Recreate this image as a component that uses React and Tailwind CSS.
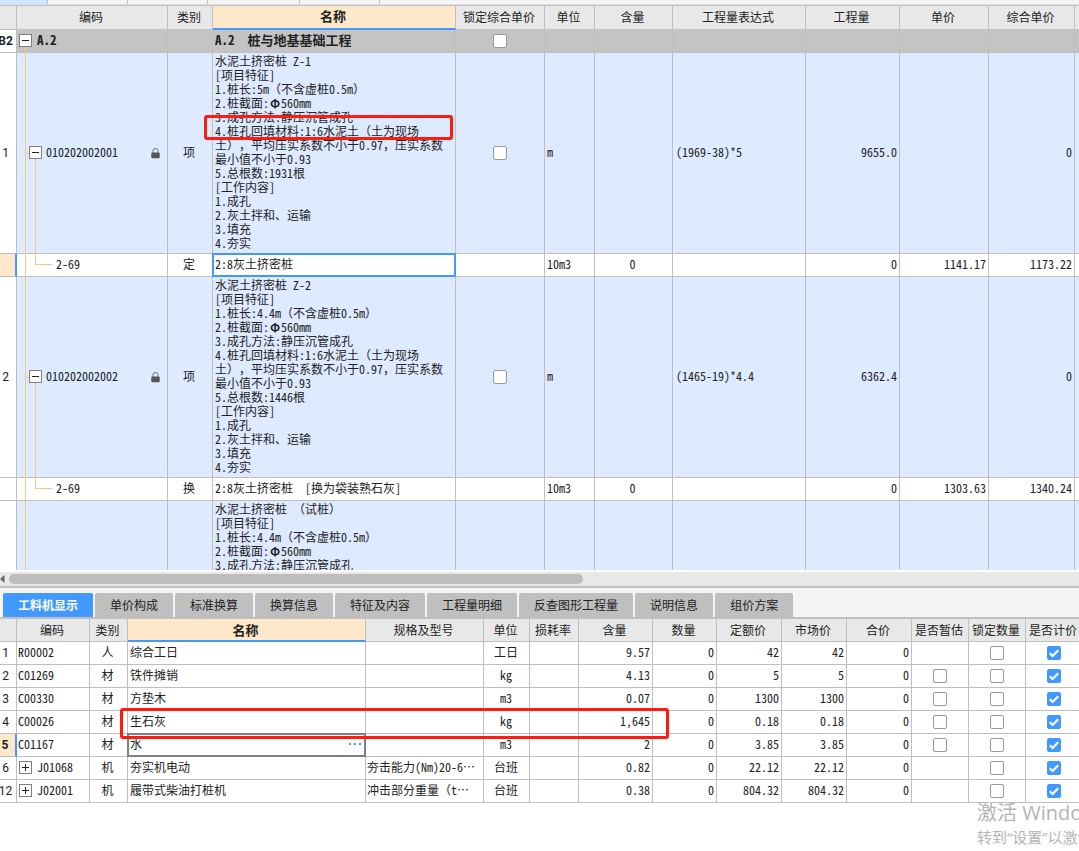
import React from "react";

const LINE = "border-r border-b border-[#bfbfbf]";

function Check({ label, checked }) {
  return (
    <span className="relative mx-auto block size-3.5">
      <input
        type="checkbox"
        aria-label={label}
        defaultChecked={checked}
        className="peer block size-3.5 appearance-none rounded-[2px] border border-[#999999] bg-white checked:border-[#4198ff] checked:bg-[#4198ff]"
      />
      <svg
        viewBox="0 0 14 14"
        className="pointer-events-none absolute inset-0 hidden size-3.5 peer-checked:block"
        fill="none"
        stroke="#fff"
        strokeWidth="2.2"
      >
        <path d="M2.8 7.3 L5.6 10 L11.2 4.2" />
      </svg>
    </span>
  );
}

function Toggle({ open, label }) {
  return (
    <button
      type="button"
      aria-label={label}
      aria-expanded={open}
      className="relative z-10 mt-px block size-[13px] shrink-0 border border-[#7f7f7f] bg-white"
    >
      <svg viewBox="0 0 11 11" className="block size-[11px]" stroke="#222" strokeWidth="1">
        <path d={open ? "M2 5.5H9" : "M2 5.5H9M5.5 2V9"} />
      </svg>
    </button>
  );
}

function Lock() {
  return (
    <svg viewBox="0 0 9 11" className="mt-[3px] ml-auto h-[11px] w-[9px] shrink-0">
      <path d="M2 5V3a2.5 2.5 0 0 1 5 0V5" fill="none" stroke="#85898f" strokeWidth="1.1" />
      <rect x="0.3" y="4.6" width="8.4" height="5.6" rx="0.8" fill="#555" />
    </svg>
  );
}

/* Gives Φ and … a full em of their own, as the ideographs around them have. */
function Wide({ children }) {
  return children.split(/([Φ…])/).map((part, i) => {
    if (part === "Φ" || part === "…") {
      return (
        <span
          key={i}
          lang="zh-CN"
          className={`inline-block w-3 text-center font-['Noto_Sans_CJK_SC',sans-serif] ${part === "Φ" ? "font-bold" : ""}`}
        >
          {part}
        </span>
      );
    }
    return part;
  });
}

const VLINE = "absolute w-px bg-[#ffc676]";
const HLINE = "absolute h-px bg-[#ffc676]";

function CodeCell({ row }) {
  if (row.kind === "group") {
    return (
      <>
        <span className={`${VLINE} -bottom-px left-2 h-2`} />
        <div className="flex h-4 items-start gap-[5px] pl-0.5">
          <Toggle open label="A.2" />
          <span className="text-[13px]">{row.code}</span>
        </div>
      </>
    );
  }
  if (row.kind === "item") {
    return (
      <>
        <span className={`${VLINE} top-0 -bottom-px left-2`} />
        {row.code && (
          <>
            <span className={`${HLINE} top-1/2 left-2 w-1`} />
            <span className={`${VLINE} top-1/2 -bottom-px left-[18px]`} />
            <div className="flex h-4 items-start gap-1 pr-[7px] pl-3">
              <Toggle open label={row.code} />
              <span>{row.code}</span>
              <Lock />
            </div>
          </>
        )}
      </>
    );
  }
  return (
    <>
      <span className={`${VLINE} top-0 -bottom-px left-2`} />
      <span className={`${VLINE} top-0 left-[18px] h-2.5`} />
      <span className={`${HLINE} top-2.5 left-[18px] w-[17px]`} />
      <div className="pb-0.5 pl-[39px]">{row.code}</div>
    </>
  );
}

const features = (title, length, count) => [
  title,
  "[项目特征]",
  `1.桩长:${length}（不含虚桩0.5m）`,
  "2.桩截面:Φ560mm",
  "3.成孔方法:静压沉管成孔",
  "4.桩孔回填材料:1:6水泥土（土为现场",
  "土），平均压实系数不小于0.97，压实系数",
  "最小值不小于0.93",
  `5.总根数:${count}根`,
  "[工作内容]",
  "1.成孔",
  "2.灰土拌和、运输",
  "3.填充",
  "4.夯实",
];

const topRows = [
  { kind: "group", no: "B2", code: "A.2", name: ["A.2  桩与地基基础工程"], check: true },
  {
    kind: "item", no: "1", code: "010202002001", type: "项", name: features("水泥土挤密桩 Z-1", "5m", "1931"),
    check: true, unit: "m", expr: "(1969-38)*5", qty: "9655.0", total: "0", marked: true,
  },
  {
    kind: "quota", no: "", code: "2-69", type: "定", name: ["2:8灰土挤密桩"],
    unit: "10m3", content: "0", qty: "0", price: "1141.17", total: "1173.22", selected: true,
  },
  {
    kind: "item", no: "2", code: "010202002002", type: "项", name: features("水泥土挤密桩 Z-2", "4.4m", "1446"),
    check: true, unit: "m", expr: "(1465-19)*4.4", qty: "6362.4", total: "0",
  },
  {
    kind: "quota", no: "", code: "2-69", type: "换", name: ["2:8灰土挤密桩  [换为袋装熟石灰]"],
    unit: "10m3", content: "0", qty: "0", price: "1303.63", total: "1340.24",
  },
  { kind: "item", no: "", code: "", type: "", name: features("水泥土挤密桩 （试桩）", "4.4m", "").slice(0, 5) },
];

const topHeads = ["", "编码", "类别", "名称", "锁定综合单价", "单位", "含量", "工程量表达式", "工程量", "单价", "综合单价", ""];

const rowBg = { group: "bg-[#c4c4c4] font-bold", item: "bg-[#deeaff]", quota: "bg-white" };
const rowHeight = { group: "h-[23px]", item: "h-[201px]", quota: "h-[23px]" };

function RowHead({ children, active, bold }) {
  return (
    <th
      scope="row"
      className={`overflow-hidden border-b border-[#bfbfbf] p-0 font-[Roboto,sans-serif] ${
        active ? "border-r-2 border-r-[#4198ff] bg-[#ffe7c9]" : "border-r bg-white"
      } ${bold ? "font-bold" : "font-normal"}`}
    >
      <div className="-ml-1 flex justify-center pr-px">{children}</div>
    </th>
  );
}

function Head({ children, active }) {
  return (
    <th
      scope="col"
      className={
        active
          ? "border-r border-b-2 border-r-[#bfbfbf] border-b-[#4198ff] bg-[#ffe7c9] p-0 pr-0.5 text-[13px] font-bold"
          : `${LINE} bg-[#e8e8e8] p-0 pr-0.5 font-normal`
      }
    >
      {children}
    </th>
  );
}

function BillTable() {
  return (
    <table className="w-full min-w-[1090px] table-fixed border-separate border-spacing-0 border-t border-[#bfbfbf]">
      <colgroup>
        <col className="w-[17px]" />
        <col className="w-[151px]" />
        <col className="w-[45px]" />
        <col className="w-[243px]" />
        <col className="w-[89px]" />
        <col className="w-[50px]" />
        <col className="w-[78px]" />
        <col className="w-[133px]" />
        <col className="w-[94px]" />
        <col className="w-[89px]" />
        <col className="w-[86px]" />
        <col />
      </colgroup>
      <thead>
        <tr className="h-6 [&>th]:pb-0.5">
          {topHeads.map((h, i) => (
            <Head key={i} active={h === "名称"}>{h}</Head>
          ))}
        </tr>
      </thead>
      <tbody>
        {topRows.map((r, i) => {
          const cell = `${LINE} ${rowBg[r.kind]}`;
          return (
            <tr key={i} className={rowHeight[r.kind]}>
              <RowHead active={r.selected} bold={r.kind === "group"}>{r.no}</RowHead>
              <td className={`${cell} relative p-0`}><CodeCell row={r} /></td>
              <td className={`${cell} p-0 pr-0.5 pb-0.5 text-center`}>{r.type}</td>
              <td
                className={`${cell} relative p-0 pl-0.5 whitespace-pre ${r.kind === "group" ? "text-[13px]" : ""} ${
                  r.kind === "item" ? "pt-px align-top" : "pb-0.5"
                }`}
              >
                {r.name.map((l) => (
                  <div key={l} className="h-3.5"><Wide>{l}</Wide></div>
                ))}
                {r.selected && <span className="pointer-events-none absolute -inset-px border-2 border-[#4198ff]" />}
                {r.marked && (
                  <span className="pointer-events-none absolute top-[62px] right-0.5 -left-[9px] z-20 h-[25px] rounded-[3px] border-3 border-[#ff1c0f]" />
                )}
              </td>
              <td className={`${cell} p-0`}>{r.check && <Check label={`锁定综合单价 ${r.code}`} />}</td>
              <td className={`${cell} p-0 pb-0.5 pl-0.5`}>{r.unit}</td>
              <td className={`${cell} p-0 pr-0.5 pb-0.5 text-center`}>{r.content}</td>
              <td className={`${cell} p-0 pb-0.5 pl-[3px]`}>{r.expr}</td>
              <td className={`${cell} p-0 pr-0.5 pb-0.5 text-right`}>{r.qty}</td>
              <td className={`${cell} p-0 pr-0.5 pb-0.5 text-right`}>{r.price}</td>
              <td className={`${cell} p-0 pr-0.5 pb-0.5 text-right`}>{r.total}</td>
              <td className={`${cell} p-0`} />
            </tr>
          );
        })}
      </tbody>
    </table>
  );
}

const tabs = ["工料机显示", "单价构成", "标准换算", "换算信息", "特征及内容", "工程量明细", "反查图形工程量", "说明信息", "组价方案"];

const resHeads = ["", "编码", "类别", "名称", "规格及型号", "单位", "损耗率", "含量", "数量", "定额价", "市场价", "合价", "是否暂估", "锁定数量", "是否计价"];

const resources = [
  { no: "1", code: "R00002", type: "人", name: "综合工日", spec: "", unit: "工日", amount: "9.57", price: "42" },
  { no: "2", code: "C01269", type: "材", name: "铁件摊销", spec: "", unit: "kg", amount: "4.13", price: "5", est: true },
  { no: "3", code: "C00330", type: "材", name: "方垫木", spec: "", unit: "m3", amount: "0.07", price: "1300", est: true },
  { no: "4", code: "C00026", type: "材", name: "生石灰", spec: "", unit: "kg", amount: "1,645", price: "0.18", est: true, marked: true },
  { no: "5", code: "C01167", type: "材", name: "水", spec: "", unit: "m3", amount: "2", price: "3.85", est: true, active: true },
  { no: "6", code: "J01068", type: "机", name: "夯实机电动", spec: "夯击能力(Nm)20-6…", unit: "台班", amount: "0.82", price: "22.12", parent: true },
  { no: "12", code: "J02001", type: "机", name: "履带式柴油打桩机", spec: "冲击部分重量（t…", unit: "台班", amount: "0.38", price: "804.32", parent: true },
];

function ResourceTable() {
  const box = `${LINE} bg-white p-0`;
  const cell = `${box} pb-0.5`;
  const num = `${cell} pr-0.5 text-right`;
  return (
    <table className="w-full min-w-[1083px] table-fixed border-separate border-spacing-0">
      <colgroup>
        <col className="w-[17px]" />
        <col className="w-[73px]" />
        <col className="w-[38px]" />
        <col className="w-[238px]" />
        <col className="w-[118px]" />
        <col className="w-[46px]" />
        <col className="w-[49px]" />
        <col className="w-[74px]" />
        <col className="w-[64px]" />
        <col className="w-[65px]" />
        <col className="w-[65px]" />
        <col className="w-[65px]" />
        <col className="w-[57px]" />
        <col className="w-[57px]" />
        <col />
      </colgroup>
      <thead>
        <tr className="h-[23px]">
          {resHeads.map((h, i) => (
            <Head key={i} active={h === "名称"}>{h}</Head>
          ))}
        </tr>
      </thead>
      <tbody>
        {resources.map((r) => (
          <tr key={r.no} className="h-[23px]">
            <RowHead active={r.active} bold={r.active}>{r.no}</RowHead>
            <td className={box}>
              <div className={`flex h-4 items-start gap-[5px] ${r.parent ? "pl-0.5" : "pl-px"}`}>
                {r.parent && <Toggle label={r.code} />}
                <span>{r.code}</span>
              </div>
            </td>
            <td className={`${cell} pr-0.5 text-center`}>{r.type}</td>
            <td className={`${cell} relative pl-0.5`}>
              <div className="flex items-center justify-between pr-1">
                {r.name}
                {r.active && (
                  <button type="button" aria-label="选择" className="flex h-3.5 items-center gap-[3px]">
                    <span className="size-0.5 bg-[#4a9be0]" />
                    <span className="size-0.5 bg-[#4a9be0]" />
                    <span className="size-0.5 bg-[#4a9be0]" />
                  </button>
                )}
              </div>
              {r.active && <span className="pointer-events-none absolute -inset-px border-2 border-[#808080]" />}
              {r.marked && (
                <span className="pointer-events-none absolute -top-[3px] -left-2 z-20 h-[31px] w-[549px] rounded-[3px] border-3 border-[#ff1c0f]" />
              )}
            </td>
            <td className={`${cell} overflow-hidden pl-px whitespace-nowrap`}><Wide>{r.spec}</Wide></td>
            <td className={`${cell} pr-px text-center`}>{r.unit}</td>
            <td className={cell} />
            <td className={num}>{r.amount}</td>
            <td className={num}>0</td>
            <td className={num}>{r.price}</td>
            <td className={num}>{r.price}</td>
            <td className={num}>0</td>
            <td className={box}>{r.est && <Check label={`是否暂估 ${r.code}`} />}</td>
            <td className={box}><Check label={`锁定数量 ${r.code}`} /></td>
            <td className={box}><Check label={`是否计价 ${r.code}`} checked /></td>
          </tr>
        ))}
      </tbody>
    </table>
  );
}

export default function App() {
  return (
    <main
      lang="zh-CN"
      className="relative min-h-screen overflow-hidden bg-white font-['Noto_Sans_Mono_CJK_SC','Noto_Sans_CJK_SC',sans-serif] text-[12px] leading-[14px] text-[#222] [text-spacing-trim:space-all]"
    >
      <div className="flex h-[5px] border-b border-[#e0e0e0] bg-[#f4f4f4]">
        <div className="w-12 border-r border-[#bfbfbf] bg-[#cce6ff]" />
        <div className="w-20 border-r border-[#bfbfbf]" />
        <div className="w-20 border-r border-[#bfbfbf]" />
        <div className="w-[92px] border-r border-[#bfbfbf]" />
        <div className="w-20 border-r border-[#bfbfbf]" />
      </div>

      <section className="h-[565px] overflow-hidden">
        <BillTable />
      </section>

      <div className="mt-0.5 flex h-4 items-center gap-1 border-b-2 border-[#bfbfbf] bg-[#e8e8e8]">
        <svg viewBox="0 0 5 8" className="h-2 w-[5px]" fill="#666">
          <path d="M4.5 0V8L0 4Z" />
        </svg>
        <div className="h-2.5 w-[574px] rounded-full bg-[#bdbdbd]" />
      </div>

      <nav role="tablist" className="flex gap-0.5 border-b-2 border-[#bfbfbf] bg-[#f4f4f4] pt-[5px] pl-[3px] font-['Noto_Sans_CJK_SC',sans-serif]">
        {tabs.map((t, i) => (
          <button
            key={t}
            type="button"
            role="tab"
            aria-selected={i === 0}
            className={`h-6 rounded-t-[2px] px-[15px] whitespace-nowrap ${
              i === 0 ? "bg-[#4198ff] font-bold text-white" : "bg-[#bfbfbf]"
            }`}
          >
            {t}
          </button>
        ))}
      </nav>

      <section className="overflow-hidden">
        <ResourceTable />
      </section>

      <aside className="pointer-events-none absolute top-[801px] right-0 w-[102px] overflow-hidden font-['Open_Sans','Noto_Sans_CJK_SC',sans-serif] whitespace-nowrap text-[#b4b4b4]">
        <p className="text-[20px] leading-6">激活 Windows</p>
        <p className="text-[15px] leading-6">转到“设置”以激活</p>
      </aside>
    </main>
  );
}
